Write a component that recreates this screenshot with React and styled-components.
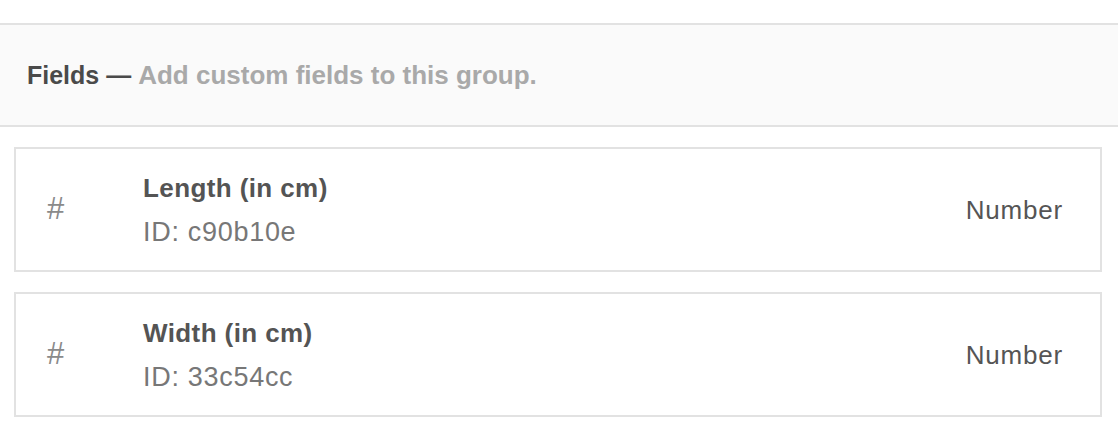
import styled, { createGlobalStyle } from "styled-components";

const GlobalStyle = createGlobalStyle`
  body {
    margin: 0;
    background: #ffffff;
    font-family: "Liberation Sans", Arial, sans-serif;
  }
`;

const fields = [
  { name: "Length (in cm)", id: "c90b10e", type: "Number" },
  { name: "Width (in cm)", id: "33c54cc", type: "Number" },
];

const App = () => {
  return (
    <Page>
      <GlobalStyle />
      <Header>
        <strong>Fields —</strong>
        <span>Add custom fields to this group.</span>
      </Header>
      <FieldList>
        {fields.map((f) => (
          <FieldCard key={f.id}>
            <TypeIcon>#</TypeIcon>
            <FieldInfo>
              <FieldName>{f.name}</FieldName>
              <FieldId>ID: {f.id}</FieldId>
            </FieldInfo>
            <FieldType>{f.type}</FieldType>
          </FieldCard>
        ))}
      </FieldList>
    </Page>
  );
};

export default App;

const Page = styled.div`
  padding-top: 23px;
`;

const Header = styled.div`
  display: flex;
  align-items: center;
  gap: 7px;
  height: 100px;
  padding: 0 27px;
  background: #fafafa;
  border-top: 2px solid #e2e2e2;
  border-bottom: 2px solid #e2e2e2;
  font-size: 26px;
  font-weight: 700;

  strong {
    color: #4a4a4a;
    font-size: 25px;
  }
  span {
    color: #a9a9a9;
  }
`;

const FieldList = styled.div`
  display: flex;
  flex-direction: column;
  gap: 20px;
  padding: 20px 16px 0 14px;
`;

const FieldCard = styled.div`
  display: flex;
  align-items: center;
  height: 121px;
  border: 2px solid #e2e2e2;
  background: #fff;
`;

const TypeIcon = styled.div`
  width: 96px;
  padding-left: 31px;
  color: #8a8a8a;
  font-size: 31px;
  font-weight: 300;
  margin-top: -2px;
`;

const FieldInfo = styled.div`
  flex: 1;
  display: flex;
  flex-direction: column;
  gap: 12px;
`;

const FieldName = styled.div`
  color: #545454;
  font-size: 26px;
  font-weight: 700;
  line-height: 32px;
  letter-spacing: 0.4px;
`;

const FieldId = styled.div`
  color: #777777;
  font-size: 27px;
  line-height: 32px;
  letter-spacing: 0.7px;
`;

const FieldType = styled.div`
  padding-right: 37px;
  color: #555555;
  font-size: 26px;
  letter-spacing: 0.8px;
  margin-top: 2px;
`;
